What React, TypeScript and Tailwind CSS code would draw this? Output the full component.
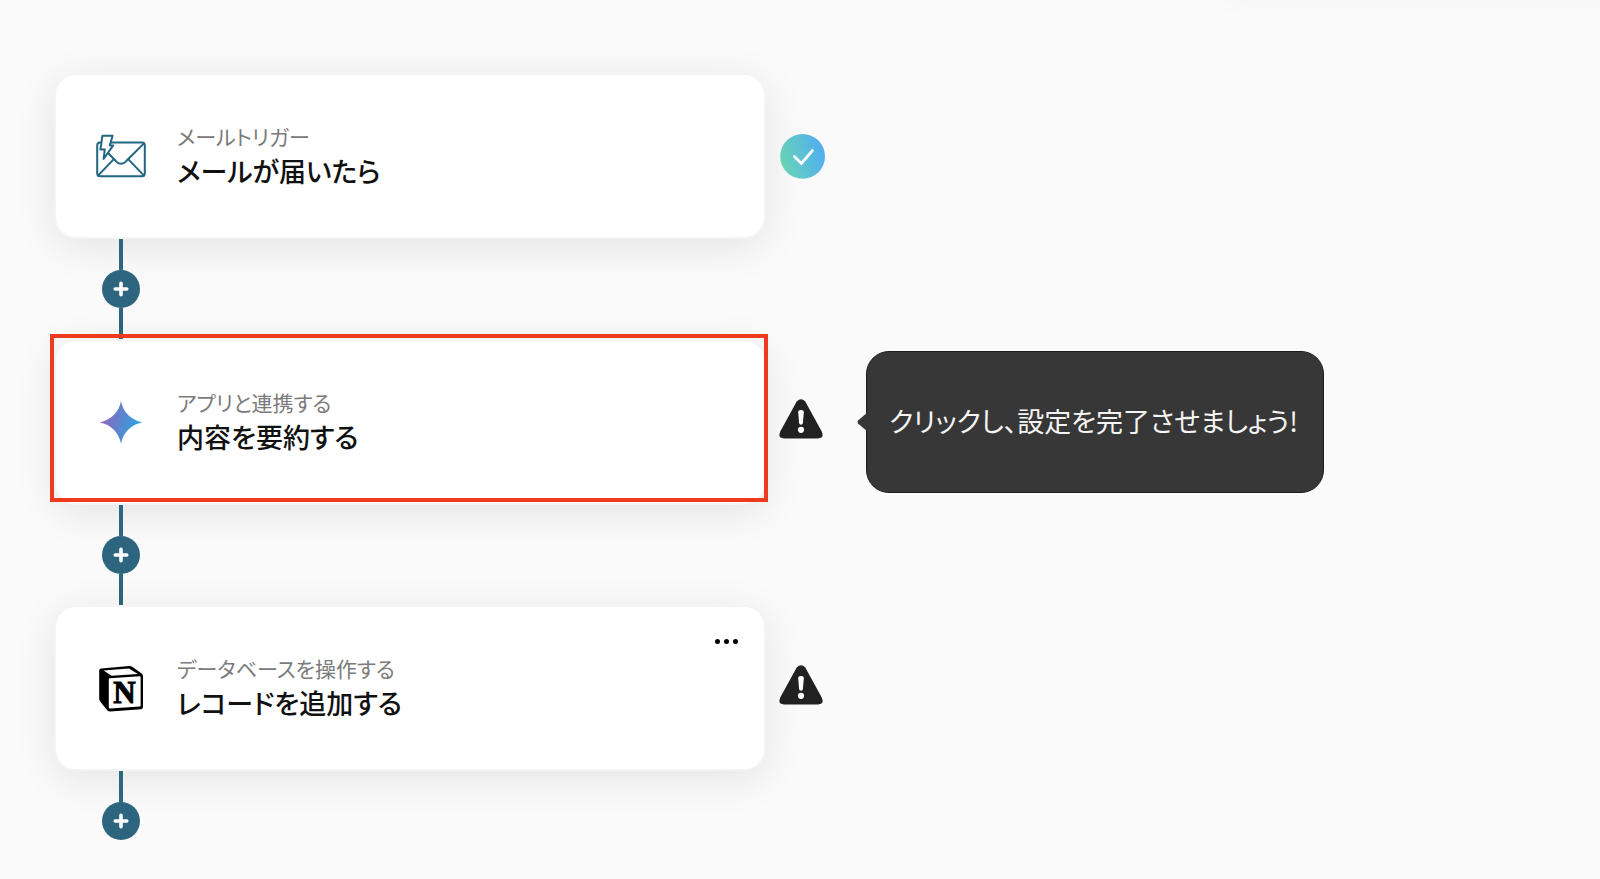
import type { ReactNode } from 'react';

type StepStatus = 'done' | 'warning';

interface IStep {
  id: string;
  category: string;
  title: string;
  icon: ReactNode;
  status: StepStatus;
  selected?: boolean;
  hasMenu?: boolean;
  hint?: string;
}

const MailTriggerIcon = () => (
  <svg className="size-[50px] shrink-0" viewBox="0 0 50 50" fill="none" stroke="#226682" strokeWidth="2" strokeLinejoin="round" strokeLinecap="round" aria-hidden="true">
    <rect x="1.2" y="11.5" width="47.6" height="33.8" rx="3" />
    <path d="M48 12.4 30.5 29.8C27 33.8 23 33.8 19.6 29.8L12 22" />
    <path d="M2 44.6 17.6 28.4M48 44.6 32.4 28.4" />
    <path d="M6.4 4.8H16.6L13.8 14.4H17.2L7.6 28 8.8 18.6H4.4Z" fill="#fff" />
  </svg>
);

const SparkleIcon = () => (
  <svg className="size-[50px] shrink-0" viewBox="0 0 50 50" aria-hidden="true">
    <defs>
      <linearGradient id="sparkle" x1="4" y1="20" x2="46" y2="30" gradientUnits="userSpaceOnUse">
        <stop offset="0" stopColor="#9168c0" />
        <stop offset="0.35" stopColor="#6d7bc8" />
        <stop offset="0.65" stopColor="#4a90d6" />
        <stop offset="1" stopColor="#2ba6e0" />
      </linearGradient>
    </defs>
    <path d="M25 4C27 15 35 23 46.4 25.4 35 27.4 27 35.4 25 46.8 23 35.4 15 27.4 3.6 25.4 15 23 23 15 25 4Z" fill="url(#sparkle)" />
  </svg>
);

const NotionIcon = () => (
  <svg className="size-[50px] shrink-0" viewBox="0 0 50 50" aria-hidden="true">
    <path d="M5 5.4 33 3.1Q35 3 36.6 4.1L45.6 10.4Q47 11.4 47 13V44Q47 46 45 46.2L14.4 48.6Q12.4 48.7 11.2 47.2L4.2 38.4Q3.2 37.2 3.2 35.6V7.6Q3.2 5.6 5 5.4Z" fill="#000" />
    <path d="M7.6 7.6 33 5.6 41.8 11 15.6 12.7Z" fill="#fff" />
    <path d="M14 15.2 43.8 13.2Q44.6 13.2 44.6 14V42.4Q44.6 43.4 43.8 43.4L14 45.4Q12.8 45.4 12.8 44.4V16.4Q12.8 15.3 14 15.2Z" fill="#fff" />
    <text x="28.4" y="40.4" textAnchor="middle" fontSize="31" fontWeight="700" fontFamily="'Liberation Serif', serif" stroke="#000" strokeWidth="1">N</text>
  </svg>
);

const DoneBadge = () => (
  <svg className="size-12 shrink-0" viewBox="0 0 48 48" role="img" aria-label="done">
    <defs>
      <linearGradient id="done" x1="4" y1="32" x2="42" y2="22" gradientUnits="userSpaceOnUse">
        <stop offset="0" stopColor="#6ad6b8" />
        <stop offset="1" stopColor="#53b1ea" />
      </linearGradient>
    </defs>
    <circle cx="24.6" cy="24.4" r="22.4" fill="url(#done)" />
    <path d="M16.4 24.4 23.4 31.4 34.4 18.6" fill="none" stroke="#fff" strokeWidth="2.8" strokeLinecap="round" />
  </svg>
);

const WarningBadge = () => (
  <svg className="size-12 shrink-0" viewBox="0 -1 48 48" role="img" aria-label="warning">
    <path d="M18.7 2.6Q23 -2.2 27.3 2.6L43.6 32.2Q46.8 39.4 40 39.4H6Q-.8 39.4 2.4 32.2Z" fill="#212121" />
    <path d="M20.2 13.2Q20.2 11 23 11T25.8 13.2L24.9 24Q24.7 25.8 23 25.8T21.1 24Z" fill="#fff" />
    <circle cx="23" cy="30.8" r="3.1" fill="#fff" />
  </svg>
);

const steps: IStep[] = [
  { id: 'mail', category: 'メールトリガー', title: 'メールが届いたら', icon: <MailTriggerIcon />, status: 'done' },
  {
    id: 'summary',
    category: 'アプリと連携する',
    title: '内容を要約する',
    icon: <SparkleIcon />,
    status: 'warning',
    selected: true,
    hint: 'クリックし、設定を完了させましょう!',
  },
  { id: 'record', category: 'データベースを操作する', title: 'レコードを追加する', icon: <NotionIcon />, status: 'warning', hasMenu: true },
];

const StepCard = ({ step }: { step: IStep }) => (
  <div className="relative w-full max-w-[712px]">
    <article className="relative flex h-[166px] items-center gap-[31px] rounded-[22px] border-2 border-[#f4f4f4] bg-white pl-10 shadow-[0_8px_40px_rgba(0,0,0,0.09)]">
      {step.icon}
      <div className="pb-1">
        <p className="text-[21px] leading-[34px] text-[#7b7b7b]">{step.category}</p>
        <h2 className="text-[27px] leading-[36px] font-medium text-[#111]">{step.title}</h2>
      </div>
      {step.hasMenu && (
        <button type="button" aria-label="menu" className="absolute top-5 right-5 flex h-7 w-9 items-center justify-center gap-1">
          <span className="size-[5px] rounded-full bg-black" />
          <span className="size-[5px] rounded-full bg-black" />
          <span className="size-[5px] rounded-full bg-black" />
        </button>
      )}
    </article>
    {step.selected && <div className="pointer-events-none absolute -top-[5px] -right-[2px] bottom-[3px] -left-[4px] border-4 border-[#ee3a1f]" />}
  </div>
);

const Hint = ({ text }: { text: string }) => (
  <div role="tooltip" className="relative ml-7 flex h-[142px] shrink-0 items-center rounded-[23px] border border-[#1c1c1c] bg-[#373737] pr-[25px] pl-[22px]">
    <svg className="absolute top-1/2 -left-[10px] h-5 w-[11px] -translate-y-1/2" viewBox="0 0 11 20" aria-hidden="true">
      <path d="M11 0 1 8.6Q0 10 1 11.4L11 20Z" fill="#373737" />
    </svg>
    <span className="pb-0.5 text-[27px] leading-[36px] text-[#f4f4f4]">{text}</span>
  </div>
);

const Connector = ({ last }: { last: boolean }) => (
  <div className="relative ml-12 flex w-[38px] flex-col items-center">
    <div className="h-[31px] w-1 bg-[#2b6780]" />
    <button type="button" aria-label="add step" className="flex size-[38px] items-center justify-center rounded-full bg-[#2d657f]">
      <svg className="size-4" viewBox="0 0 16 16" fill="none" stroke="#fff" strokeWidth="3.6" strokeLinecap="round" aria-hidden="true">
        <path d="M8 2.2V13.8M2.2 8H13.8" />
      </svg>
    </button>
    {!last && <div className="h-[31px] w-1 bg-[#2b6780]" />}
  </div>
);

const App = () => {
  return (
    <main
      lang="ja"
      className="relative min-h-screen overflow-hidden bg-[#fafafa] pt-[73px] pl-[54px] font-['Noto_Sans_CJK_JP',sans-serif] [font-feature-settings:'palt']"
    >
      {/* shadow of the panel docked above the canvas */}
      <div className="absolute -top-16 -right-8 h-[60px] w-[420px] rounded-2xl shadow-[0_0_32px_rgba(0,0,0,0.03)]" />
      <ol>
        {steps.map((step, i) => (
          <li key={step.id}>
            <div className="relative flex items-center gap-3">
              <StepCard step={step} />
              {step.status === 'done' ? <DoneBadge /> : <WarningBadge />}
              {step.hint && <Hint text={step.hint} />}
            </div>
            <Connector last={i === steps.length - 1} />
          </li>
        ))}
      </ol>
    </main>
  );
};

export default App;
